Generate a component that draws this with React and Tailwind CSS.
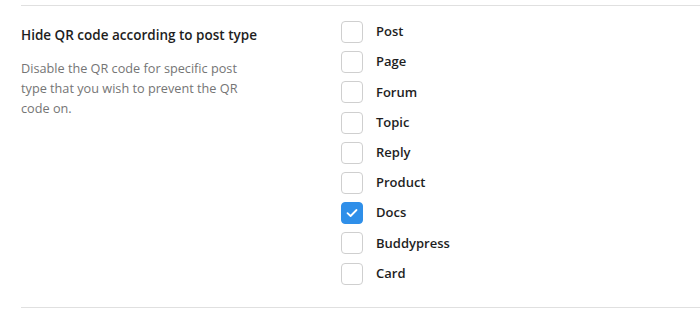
import React from "react";

const items = [
  ["Post", false],
  ["Page", false],
  ["Forum", false],
  ["Topic", false],
  ["Reply", false],
  ["Product", false],
  ["Docs", true],
  ["Buddypress", false],
  ["Card", false],
];

export default function App() {
  return (
    <div
      className="w-[700px] h-[311px] bg-white pl-[21px] pt-[5px] overflow-hidden"
      style={{ fontFamily: '"Open Sans", "Noto Sans", sans-serif' }}
    >
      <div className="border-t border-[#e0e0e0] border-b flex pt-[15px] pb-[22px]">
        <div className="w-[320px] shrink-0">
          <div className="mt-[4px] text-[13.5px] leading-[20px] font-semibold text-[#1e1e1e]">
            Hide QR code according to post type
          </div>
          <p className="mt-[13px] w-[228px] text-[12.7px] leading-[20px] text-[#757575]">
            Disable the QR code for specific post type that you wish to prevent the QR code on.
          </p>
        </div>
        <div className="flex flex-col gap-[8.2px]">
          {items.map(([label, checked]) => (
            <label key={label} className="flex items-center h-[22px]">
              <span
                className={
                  "w-[22px] h-[22px] rounded-[4px] flex items-center justify-center " +
                  (checked ? "bg-[#2f8fe9] border border-[#2f8fe9]" : "bg-white border border-[#cfcfcf]")
                }
              >
                {checked && (
                  <svg width="12" height="10" viewBox="0 0 12 10" fill="none">
                    <path d="M1.5 5.2 L4.6 8 L10.5 2" stroke="white" strokeWidth="1.8" strokeLinecap="round" strokeLinejoin="round" />
                  </svg>
                )}
              </span>
              <span className="ml-[13px] text-[13px] font-semibold text-[#1e1e1e]">{label}</span>
            </label>
          ))}
        </div>
      </div>
    </div>
  );
}
